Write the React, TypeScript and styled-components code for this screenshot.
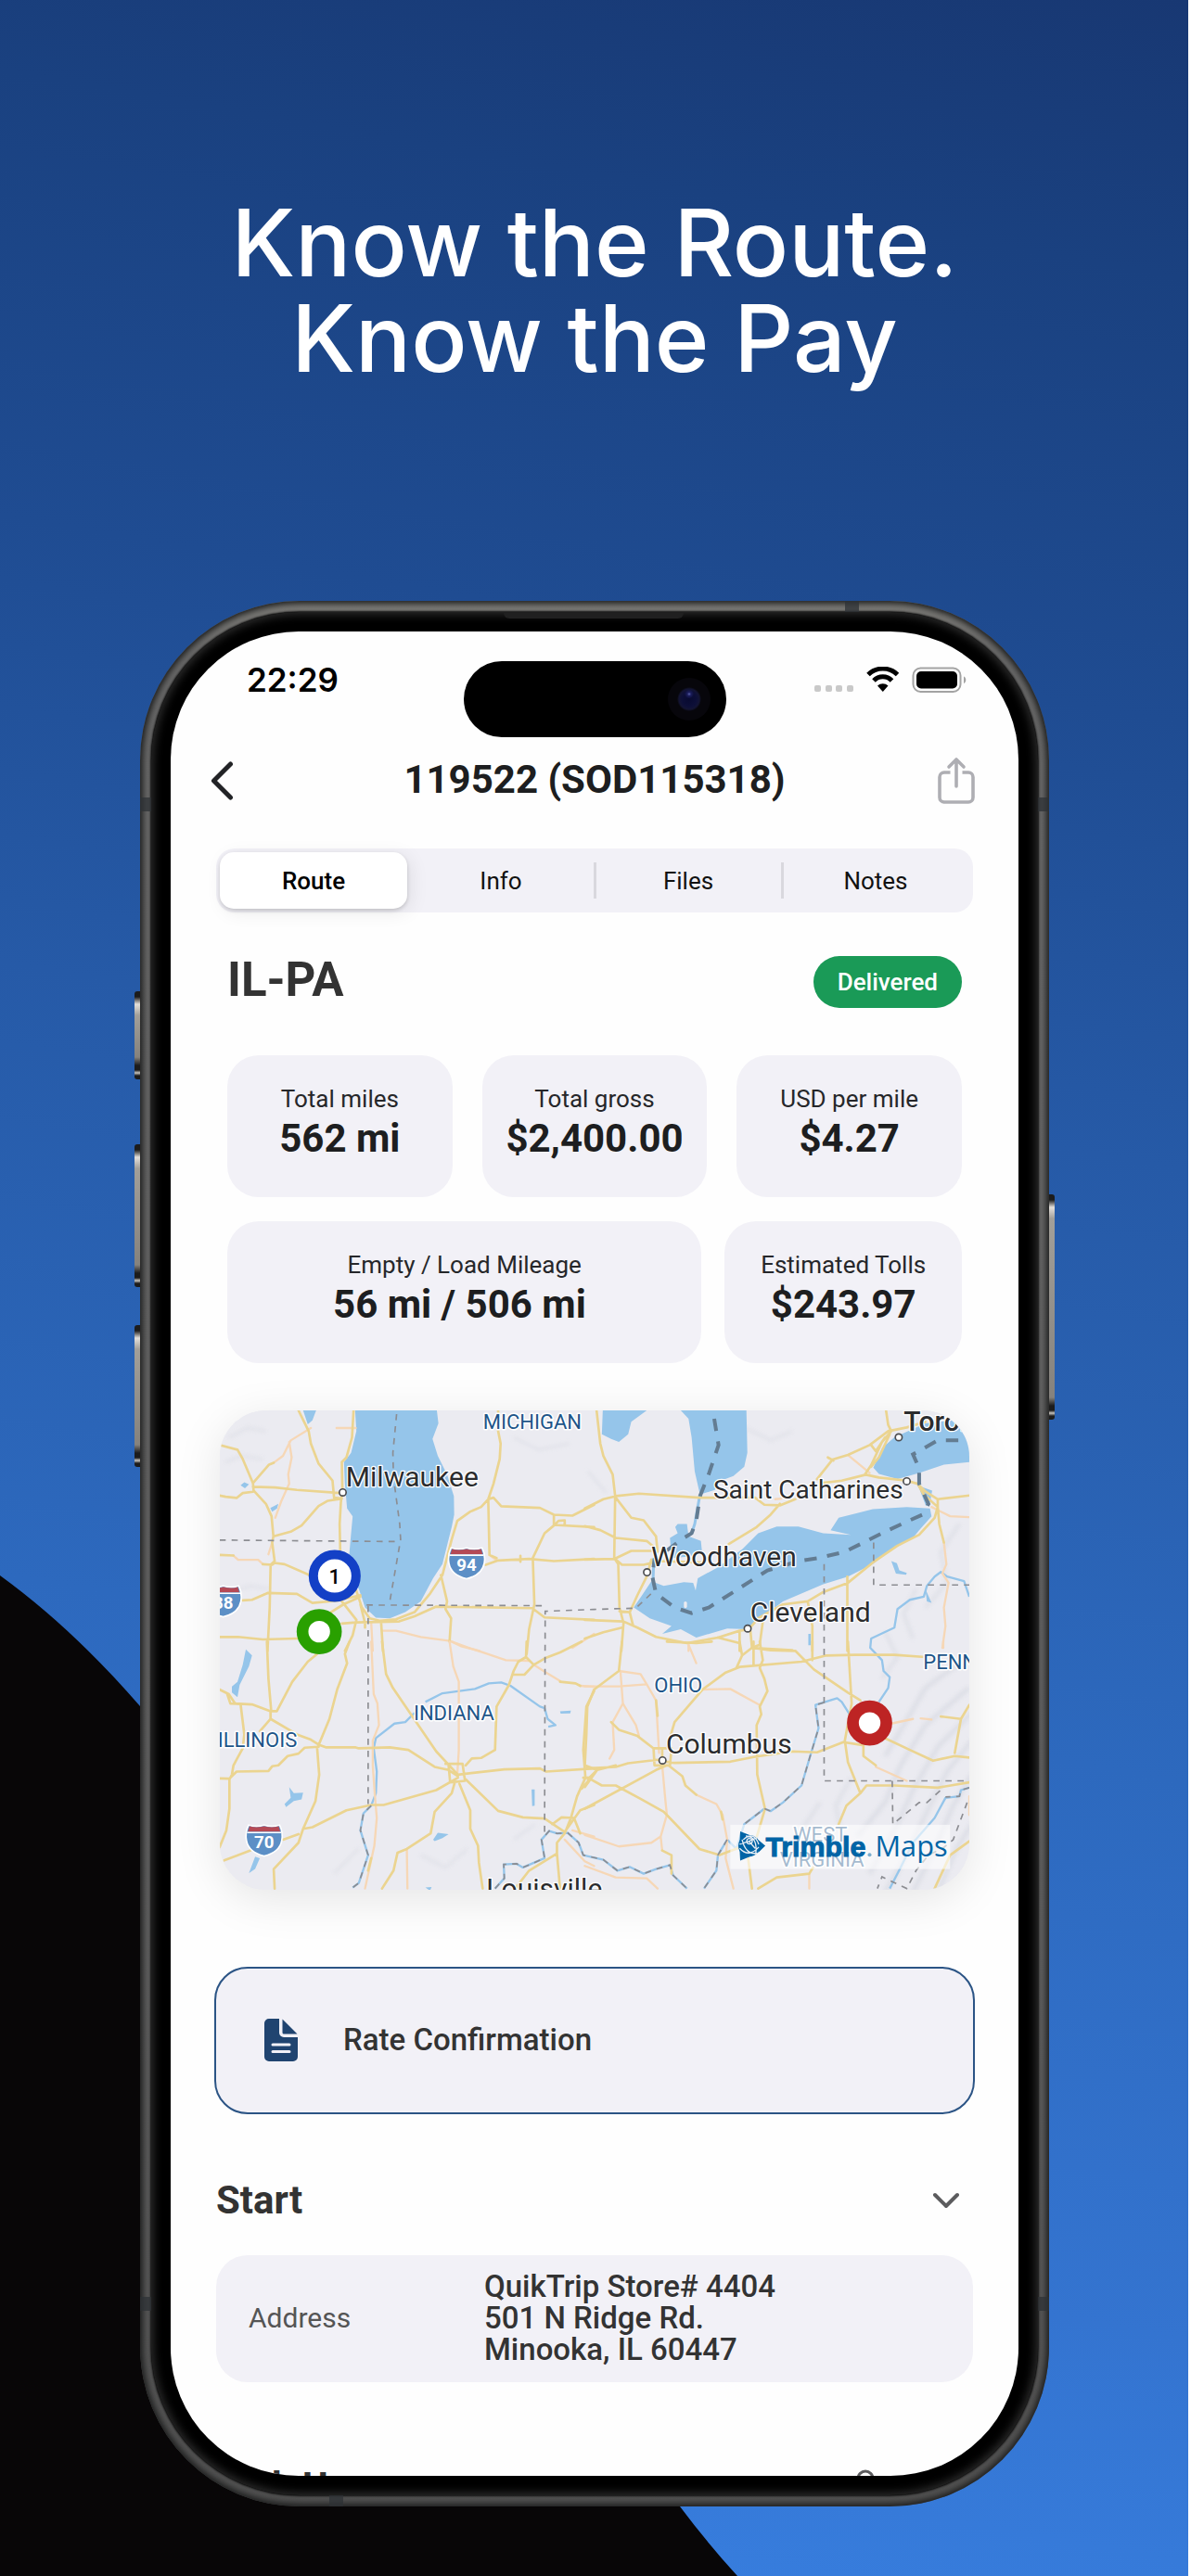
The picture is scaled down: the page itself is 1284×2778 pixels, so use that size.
import React, { useState } from 'react';
import styled, { createGlobalStyle } from 'styled-components';

const GlobalStyle = createGlobalStyle`
  * { box-sizing: border-box; }
  body { margin: 0; font-family: Roboto, "Liberation Sans", sans-serif; }
  button { font: inherit; color: inherit; border: 0; background: none; padding: 0; cursor: pointer; }
  h1, h2, h3, p, dl, dt, dd { margin: 0; font-weight: inherit; }
`;

const Page = styled.main`
  position: relative;
  overflow: hidden;
  min-height: 100vh;
  padding: 210px 23px 75px 24px;
  border-right: 3px solid #fff;
  display: flex;
  flex-direction: column;
  align-items: center;
  gap: 232px;
  background: linear-gradient(190deg, #183873 0%, #1a4180 10%, #1f4c92 26%, #265aa7 42%, #2d69be 64%, #3474d0 84%, #3880e2 100%);
`;

const Swoosh = styled.svg`
  position: absolute;
  left: 0;
  bottom: 0;
  width: 797px;
  height: 1079px;
`;

const Headline = styled.h1`
  position: relative;
  font-family: Inter, "Liberation Sans", sans-serif;
  font-size: 100px;
  line-height: 103px;
  font-weight: 500;
  text-align: center;
  color: #fff;
`;

/* Phone body */

const Phone = styled.section`
  position: relative;
  flex: none;
  display: flex;
  width: 980px;
  max-width: 100%;
  min-height: 0;
  aspect-ratio: 980 / 2055;
  padding: 12px;
  border-radius: 172px;
  background: linear-gradient(180deg, #7b7a76 0, #666 60px, #5d5d5d 70%, #505050 100%);
  box-shadow: inset 0 0 6px 3px #1d1e1e;
`;

const Bezel = styled.div`
  flex: 1;
  display: flex;
  min-width: 0;
  min-height: 0;
  padding: 21px;
  border-radius: 160px;
  background: #000;
  box-shadow: 0 0 2px 1px #111, inset 0 0 10px 3px #2b2b2b;
`;

const SideKey = styled.span<{ $side: 'left' | 'right'; $top: number; $height: number }>`
  position: absolute;
  ${(p) => p.$side}: -6px;
  top: ${(p) => p.$top}px;
  width: 6px;
  height: ${(p) => p.$height}px;
  border-radius: ${(p) => (p.$side === 'left' ? '3px 0 0 3px' : '0 3px 3px 0')};
  background: linear-gradient(180deg, #1c1c1c 0, #1c1c1c 6px, #e4e0db 14px, #a29f99 26px, #85827d calc(100% - 24px), #1c1c1c calc(100% - 15px), #1c1c1c calc(100% - 10px), #c9c6c0 calc(100% - 7px), #1c1c1c calc(100% - 4px));
`;

const Antenna = styled.span<{ $edge: 'top' | 'bottom' | 'left' | 'right'; $at: number }>`
  position: absolute;
  ${(p) => p.$edge}: 0;
  ${(p) => (p.$edge === 'top' || p.$edge === 'bottom' ? 'left' : 'top')}: ${(p) => p.$at}px;
  width: ${(p) => (p.$edge === 'top' || p.$edge === 'bottom' ? 15 : 12)}px;
  height: ${(p) => (p.$edge === 'top' || p.$edge === 'bottom' ? 12 : 15)}px;
  background: rgba(46, 50, 54, 0.75);
`;

const Speaker = styled.span`
  position: absolute;
  top: 13px;
  left: 50%;
  width: 194px;
  height: 6px;
  margin-left: -98px;
  border-radius: 0 0 6px 6px;
  background: #202020;
`;

const Screen = styled.div`
  flex: 1;
  min-width: 0;
  min-height: 0;
  overflow: hidden;
  border-radius: 138px;
  background: #fefefe;
`;

/* Status bar */

const StatusBar = styled.div`
  display: grid;
  grid-template-columns: 1fr 283px 1fr;
  align-items: start;
  padding: 32px 56px 0;
`;

const Clock = styled.time`
  padding-left: 26px;
  font-family: Inter, sans-serif;
  font-size: 35px;
  line-height: 40px;
  font-weight: 600;
  color: #000;
`;

const Island = styled.div`
  display: flex;
  justify-content: flex-end;
  align-items: center;
  height: 82px;
  padding-right: 17px;
  border-radius: 41px;
  background: #000;
`;

const Camera = styled.span`
  width: 46px;
  height: 46px;
  border-radius: 50%;
  background: radial-gradient(circle at 50% 38%, #5a62a8 0, #1b1d5c 2px, transparent 5px),
    radial-gradient(circle, #080a30 0, #0d0f38 8px, #131433 11px, #07060b 13px, #07060b 100%);
`;

const StatusIcons = styled.div`
  display: flex;
  justify-content: flex-end;
  align-items: center;
  height: 40px;
`;

/* Navigation */

const NavBar = styled.header`
  display: grid;
  grid-template-columns: 60px 1fr 60px;
  align-items: center;
  height: 50px;
  margin: 20px 40px 0;
`;

const NavButton = styled.button<{ $align: 'start' | 'end' }>`
  display: flex;
  justify-content: flex-${(p) => p.$align};
  padding: 0 ${(p) => (p.$align === 'end' ? 7 : 0)}px 0 ${(p) => (p.$align === 'start' ? 2 : 0)}px;
`;

const NavTitle = styled.h2`
  font-size: 42px;
  line-height: 50px;
  font-weight: 700;
  text-align: center;
  white-space: nowrap;
  color: #1d1e20;
`;

const Tabs = styled.div`
  display: grid;
  grid-template-columns: repeat(4, 1fr);
  margin: 50px 49px 0;
  padding: 4px;
  border-radius: 20px;
  background: #f2f1f7;
`;

const Tab = styled.button<{ $divided: boolean }>`
  position: relative;
  height: 61px;
  border-radius: 15px;
  font-size: 26px;
  line-height: 30px;
  color: #111;
  &[aria-selected='true'] {
    background: #fff;
    font-weight: 500;
    color: #000;
    box-shadow: 0 2px 4px rgba(0, 0, 0, 0.16), 4px 4px 20px rgba(0, 0, 0, 0.08);
  }
  &::before {
    content: '';
    position: absolute;
    left: -1px;
    top: 11px;
    width: 3px;
    height: 39px;
    background: ${(p) => (p.$divided ? '#d9d8de' : 'transparent')};
  }
`;

/* Summary */

const Summary = styled.section`
  display: flex;
  flex-direction: column;
  margin: 47px 61px 0;
`;

const LaneRow = styled.div`
  display: flex;
  justify-content: space-between;
  align-items: flex-start;
  margin-bottom: 51px;
`;

const Lane = styled.h3`
  font-size: 51px;
  line-height: 52px;
  font-weight: 700;
  color: #333;
`;

const StatusBadge = styled.span`
  padding: 13px 26px;
  border-radius: 28px;
  font-size: 26px;
  line-height: 30px;
  font-weight: 500;
  color: #fff;
  background: #1a9a57;
`;

const StatRow = styled.dl<{ $columns: string; $gap: number }>`
  display: grid;
  grid-template-columns: ${(p) => p.$columns};
  gap: ${(p) => p.$gap}px;
  & + & { margin-top: 26px; }
`;

const StatCard = styled.div`
  padding: 32px 0 35px;
  border-radius: 34px;
  text-align: center;
  white-space: nowrap;
  background: #f2f1f7;
`;

const StatLabel = styled.dt`
  font-size: 26px;
  line-height: 30px;
  color: #26272a;
`;

const StatValue = styled.dd`
  font-size: 42px;
  line-height: 56px;
  font-weight: 700;
  color: #1d1e20;
`;

/* Map */

const MapCard = styled.figure`
  margin: 51px 53px 0;
  border-radius: 50px;
  overflow: hidden;
  background: #ebebf1;
  box-shadow: 0 10px 50px rgba(0, 0, 0, 0.1);
  svg { display: block; width: 100%; height: auto; }
`;

/* Documents and stops */

const DocumentButton = styled.button`
  display: flex;
  align-items: center;
  gap: 48px;
  width: calc(100% - 94px);
  height: 159px;
  margin: 83px 47px 0;
  padding: 0 51px;
  border: 2px solid #2b5485;
  border-radius: 36px;
  font-size: 33px;
  line-height: 40px;
  font-weight: 500;
  color: #333;
  background: #f2f1f7;
`;

const Stop = styled.section<{ $gap: number }>`
  margin: ${(p) => p.$gap}px 49px 0;
`;

const StopHeader = styled.div<{ $inset: number }>`
  display: flex;
  justify-content: space-between;
  align-items: center;
  padding-right: ${(p) => p.$inset}px;
`;

const StopTitle = styled.h3`
  font-size: 42px;
  line-height: 50px;
  font-weight: 700;
  color: #333;
`;

const IconButton = styled.button`
  display: flex;
`;

const AddressCard = styled.dl`
  display: grid;
  grid-template-columns: 254px 1fr;
  align-items: center;
  margin-top: 34px;
  padding: 17px 35px 18px;
  border-radius: 34px;
  background: #f2f1f7;
`;

const AddressLabel = styled.dt`
  font-size: 30px;
  line-height: 34px;
  color: #555;
`;

const AddressText = styled.dd`
  font-size: 33px;
  line-height: 34px;
  font-weight: 500;
  color: #333;
`;

/* Icons */

const Signal = () => (
  <svg width="164" height="28" viewBox="0 0 164 28" aria-label="Wi-Fi, battery full">
    {[0, 12, 23, 35].map((x) => (
      <rect key={x} x={x} y="20" width="7" height="7" rx="2" fill="#c9c9c9" />
    ))}
    <g fill="none" stroke="#000">
      <path d="M58 8.500a22.500 22.500 0 0 1 31.500 0" strokeWidth="5" />
      <path d="M64 15a13.500 13.500 0 0 1 19.500 0" strokeWidth="5" />
    </g>
    <path d="M68 20.500a8.500 8.500 0 0 1 11.500 0L73.800 27Z" fill="#000" />
    <rect x="106.500" y="1.500" width="51" height="25.500" rx="8" fill="none" stroke="#a3a3a3" strokeWidth="2" />
    <rect x="110" y="5" width="44" height="18.500" rx="5" fill="#000" />
    <path d="M161 10.500c3 1 3 6.500 0 7.500Z" fill="#a3a3a3" />
  </svg>
);

const BackIcon = () => (
  <svg width="26" height="46" viewBox="0 0 26 46" fill="none" stroke="#222326" strokeWidth="5" strokeLinecap="round" strokeLinejoin="round">
    <path d="M22.500 6 4.500 24l18 18" />
  </svg>
);

const ShareIcon = () => (
  <svg width="40" height="52" viewBox="0 0 40 52" fill="none" stroke="#aeaeb3" strokeWidth="3.600" strokeLinecap="round" strokeLinejoin="round">
    <path d="M13.500 18H7a5 5 0 0 0-5 5v22a5 5 0 0 0 5 5h26a5 5 0 0 0 5-5V23a5 5 0 0 0-5-5h-6.500" strokeLinecap="butt" />
    <path d="M20 33V4M12 12l8-8 8 8" />
  </svg>
);

const DocumentIcon = () => (
  <svg width="38" height="48" viewBox="0 0 38 48">
    <path d="M6 1h11v15a5 5 0 0 0 5 5h15v21a5 5 0 0 1-5 5H6a5 5 0 0 1-5-5V6a5 5 0 0 1 5-5Z" fill="#204470" />
    <path d="M20.500 1.500 36.500 17.500H22a1.500 1.500 0 0 1-1.500-1.500Z" fill="#204470" />
    <path d="M10 29h18M10 36.500h18" stroke="#f2f1f7" strokeWidth="3" strokeLinecap="round" />
  </svg>
);

const ChevronIcon = () => (
  <svg width="30" height="18" viewBox="0 0 30 18" fill="none" stroke="#5c5c5e" strokeWidth="4" strokeLinecap="round" strokeLinejoin="round">
    <path d="M3 3l12 12L27 3" />
  </svg>
);

const ClipIcon = () => (
  <svg width="20" height="40" viewBox="0 0 20 40" fill="none" stroke="#5c5c5e" strokeWidth="3" strokeLinecap="round">
    <path d="M2 28V11a8 8 0 0 1 16 0v19a6 6 0 0 1-12 0V14" />
  </svg>
);

/* Map drawing */

const highways = [
  // north-west
  {
    at: [0, 0],
    main: 'M50 175 108 190 125 220 158 298 160 322 200 365 218 405 224 470 220 490 228 550 215 562 212 700 205 840M158 298 210 238 225 232M305 63 338 130 345 170 370 235 415 290 420 345 445 348 400 355 370 372 315 435 280 455 225 470M158 310 230 312 300 320 440 330M50 338 70 342 105 346 125 330 158 326M483 63 478 150 460 215 445 230 447 320 442 360 438 430 440 520M50 530 95 532M190 560 220 562 228 556 260 560 340 595M125 677 155 675 205 653 300 656 350 685 430 678 505 660M50 795 110 795 190 803 300 800M410 715 450 690 505 665M445 680 492 740M445 752 490 748 630 745 680 728 750 697 1060 702 1100 732 1260 740M490 640 510 700 535 735 570 743 620 738 680 715 730 655 770 595 800 480 818 420 860 390 895 375 918 350 935 300 955 220 958 170 950 130 950 63M918 350 922 530 945 540M918 350 935 345 960 373 1085 378 1130 400 1190 403 1260 368M1130 400 1130 435 1100 460 1062 540 1067 690 1050 770 1042 850M1130 435 1145 420 1165 418 1165 432M1130 433 1260 440M910 562 950 548 1050 543 1130 550 1260 543M1022 533 1022 552M765 595 785 680 780 705 798 735 793 810M572 748 578 840M492 740 480 790 455 840M505 690 520 750 520 765',
    minor: 'M225 232 255 210 280 160 345 120M275 165 283 215 272 270 275 300 250 355 230 410M428 120 490 120M95 532 110 546 175 546 190 560M220 490 208 528M540 750 545 840M575 775 620 775 700 795 795 808 830 825 890 840M1260 785 1190 830M922 530 945 548',
  },
  // north-east
  {
    at: [1230, 0],
    main: 'M38 63 50 170 60 210 90 270 98 340 95 540 108 560 112 700 125 750 118 840M0 380 60 350 100 340 175 332 370 345 550 345 580 368 630 370 680 350M630 365 600 400 555 440 465 495M100 345 150 410 190 418 230 470 235 520M0 437 50 450 100 475 200 485 230 510M0 545 95 543 150 517 215 517M95 540 120 562 190 562 240 550 380 555M215 545 200 600 170 660 145 715 155 755M112 712 145 715M0 740 125 745 170 765 230 795 330 815 430 797 500 775 530 770 560 735 640 690 720 680 770 650 850 620 930 555 1010 500 1080 465 1130 410 1140 375 1095 335 1075 300 1040 290 950 280 905 270 925 240 960 165 990 130 980 110 973 63M1100 100 1040 118 980 130 920 175 850 207 800 222 750 285M785 215 803 225M770 297 830 290 910 270M925 175 940 195 970 150M925 245 950 215 985 140M430 797 500 815M1075 300 1100 325 1140 350 1242 338M1140 350 1140 375 1145 430 1160 490M848 600 848 840M720 680 735 760 735 840M0 800 60 780 120 765M500 775 500 840M535 775 540 830 670 838M575 745 565 820 540 830',
    minor: 'M1160 490 1168 560 1155 590 1175 620 1160 700 1165 760 1155 830M1120 375 1140 385 1180 405 1242 408M850 207 920 265M335 815 335 840M615 350 635 348',
  },
  // south-west
  {
    at: [0, 810],
    main: 'M203 0 208 120 217 225M365 40 335 65 285 130 235 225 215 225M470 0 455 40 462 70 430 155 405 250 370 335M50 155 80 170 100 200 155 203 215 225 215 250 300 300 345 317 370 333 395 342 490 342 500 345 600 342 660 350 745 405 790 415 820 435M215 250 180 290M75 170 85 200 118 202 130 300 125 345 95 400 90 430 82 445 82 540 72 610 50 665M50 442 82 443 105 420 208 418 220 403 240 400 270 370 305 362 325 343 370 340M365 340 372 430 360 515 320 605 305 650 225 735 228 798M320 605 350 600 460 545 540 528 580 528 750 480 820 440M255 640 305 622M65 707 150 675M575 0 588 105 610 150 750 355 820 430M845 400 865 378 895 376 940 350 945 210 985 140 1000 95 1015 65 1040 50 1042 0M1040 50 1065 75 1035 107 1000 107M1065 75 1105 52 1150 35 1220 0M1150 130 1200 135 1215 143M780 395 835 395 843 450 795 455 790 400M820 430 970 413 1085 410 1105 420 1260 410M845 445 950 547 1030 568 1100 572 1165 615M825 460 860 545 860 605 885 660 888 715 900 798M810 455 800 490 745 550 732 620 655 670 625 682 612 740 575 798M1260 160 1235 210 1225 350 1232 440 1205 500 1185 570 1165 620M1125 590 1155 568 1195 570 1215 620M1165 615 1215 545 1260 528M1165 620 1140 650 1140 685 1050 740 1005 798M1140 685 1150 798M1225 440 1250 440 1220 475M540 700 530 740',
    minor: 'M1065 75 1105 100 1150 127M1215 143 1260 146M793 0 805 80 823 130 823 350 818 430M800 0 860 22 900 35 975 60 1050 62M655 670 657 798M540 0 548 170 560 200 565 270 545 320 545 400 552 500 558 570 550 660 520 798M1165 640 1230 710 1260 725M1190 610 1260 630M215 225 215 250',
  },
  // south-east
  {
    at: [1230, 810],
    main: 'M120 0 110 95 30 155 8 210 5 300 0 400 40 415 10 445M85 260 110 285 170 305 222 345 280 345 275 400 225 400 222 345M250 350 250 395M0 410 100 405 140 393 235 382M0 540 230 415 265 400M0 470 40 415 100 400M10 440 55 465 100 465 180 508 255 550 370 670 435 690 515 660M240 385 290 392 470 388 550 372 670 355 750 358 835 325 900 335 900 370 940 400M265 345 290 260 380 155 455 100 500 82 700 65 780 45 870 43 1000 43 1100 50M500 0 508 45 490 85M565 0 575 60 565 85 580 120 590 160 565 210 570 235 555 270 557 430 582 540 550 650M508 45 540 20 600 28 680 30 740 90 850 165 890 190M735 0 735 60M850 0 862 200 840 320 850 390 890 490 910 465 1000 465 1140 472 1242 455M270 400 315 435 325 465 360 495M250 675 280 690 280 750M230 190 235 240M525 680 540 798M560 798 620 762 725 750 740 725M890 490 845 530 820 590M965 310 1050 350 1125 385 1195 370 1242 375M1150 242 1215 250 1195 360M1215 250 1242 205M1242 645 1180 690 1130 798M440 550 445 575M265 0 360 5 410 0M545 0 545 75',
    minor: 'M0 145 110 145 200 138 230 190 240 360M110 95 180 105 200 138M115 95 123 200 90 260 95 350 80 378M123 200 165 270 175 305M380 155 470 153 565 205M335 10 360 70M360 495 425 525 445 560 460 640 455 700 480 798M250 400 260 510 265 560 245 630 250 675M0 625 110 662 215 650 245 630M265 560 370 670M0 725 100 762 200 765 235 798M460 720 480 798M725 750 725 798M940 405 1040 450M990 265 1060 250M1085 248 1120 252M1158 0 1158 20M1242 500 1242 560',
  },
];

const Shield = ({ x, y, label }: { x: number; y: number; label: string }) => (
  <g transform={`translate(${x} ${y})`}>
    <path d="M-50-50Q-25-42 0-50 25-42 50-50 62-25 57 0 50 38 0 50-50 38-57 0-62-25-50-50Z" fill="#5c8fc6" stroke="#fff" strokeWidth="5" />
    <path d="M-47-46Q-25-40 0-46 25-40 47-46L52-29H-52Z" fill="#b54a56" />
    <path d="M-55-26H55" stroke="#fff" strokeWidth="5" />
    <text x="0" y="24" textAnchor="middle" fontSize="56" fontWeight="700" fill="#fff">{label}</text>
  </g>
);

const cities = [
  { name: 'Milwaukee', x: 458, y: 308, dot: [448, 328] },
  { name: 'Saint Catharines', x: 1645, y: 348, dot: [2270, 292] },
  { name: 'Woodhaven', x: 1444, y: 566, dot: [1431, 586] },
  { name: 'Cleveland', x: 1764, y: 747, dot: [1756, 768] },
  { name: 'Columbus', x: 1492, y: 1173, dot: [1481, 1194] },
];

const states = [
  { name: 'MICHIGAN', x: 901, y: 122 },
  { name: 'INDIANA', x: 677, y: 1065 },
  { name: 'ILLINOIS', x: 44, y: 1152 },
  { name: 'OHIO', x: 1454, y: 973 },
  { name: 'PENNSYLVANIA', x: 2323, y: 900 },
  { name: 'WEST', x: 1903, y: 1455 },
  { name: 'VIRGINIA', x: 1860, y: 1536 },
];

const RouteMap = () => (
  <svg viewBox="51 63 2421 1548" role="img" aria-label="Route map from Illinois to Pennsylvania" fontFamily="Roboto, sans-serif">
    <defs>
      <filter id="relief" x="-10%" y="-10%" width="120%" height="120%"><feGaussianBlur stdDeviation="7" /></filter>
    </defs>
    <rect x="0" y="0" width="2500" height="1700" fill="#ebebf1" />
    <g fill="none" stroke="#d9dbe3" strokeWidth="14" opacity="0.8" filter="url(#relief)">
      <path d="M2470 960 2330 1080 2250 1210 2200 1330 2110 1440M2480 1040 2370 1150 2290 1290 2240 1400 2150 1560M2480 1130 2400 1230 2330 1370 2270 1500 2200 1620M2480 1240 2420 1340 2360 1480 2290 1620M2480 1400 2430 1480 2370 1620M2440 880 2330 960 2260 1080 2200 1180" />
      <path d="M2440 430 2380 520 2400 620 2330 700M2300 640 2260 720 2290 800M2200 780 2240 860 2190 930M2090 1250 2040 1340 2060 1430M1990 1330 1930 1420" strokeWidth="9" />
      <path d="M70 230 120 210 190 220M80 150 140 120 200 130M1000 150 1080 190 1180 170M1750 120 1830 160 1900 130M90 650 150 630 210 640M700 1500 780 1540 850 1480M420 1560 500 1480M1000 1450 1070 1400M1240 260 1300 330" strokeWidth="6" />
    </g>
    <g fill="#95c5ea">
      <path d="M488 63 492 130 475 200 452 230 455 300 462 380 480 405 475 460 468 540 470 600 500 640 520 700 555 733 600 735 650 715 700 680 740 605 770 560 785 500 800 440 808 400 807 340 785 270 755 210 738 155 757 105 752 63Z" />
      <path d="M320 63H362L350 95 335 108ZM118 305 130 295 145 302 132 315ZM214 378 240 365 236 380 220 390Z" />
      <path d="M1288 63H1430L1380 100 1370 140 1340 165 1315 155 1285 140ZM1540 63H1752L1755 200 1745 245 1710 275 1670 290 1650 320 1602 335 1585 260 1575 150 1565 90Z" />
      <path d="M1530 430 1560 430 1565 470 1605 485 1608 515 1570 535 1510 540 1505 475 1530 460 1522 440Z" />
      <path d="M1445 615 1485 630 1550 618 1580 620 1588 645 1595 605 1660 570 1740 510 1790 460 1850 438 1920 438 2000 460 2090 465 2024 450 2050 410 2110 395 2160 382 2270 375 2345 380 2350 405 2310 450 2290 475 2210 520 2160 560 2080 600 2000 625 1870 680 1790 740 1760 770 1690 768 1590 797 1540 770 1480 785 1510 760 1440 735 1388 700 1415 660Z" />
      <path d="M2472 230 2390 238 2310 265 2240 285 2180 268 2162 248 2190 185 2230 150 2330 105 2472 90Z" />
      <path d="M2318 310 2352 322 2345 362 2325 350ZM2220 550 2238 557 2246 580 2270 588 2268 594 2235 590ZM1952 785 1960 785 1960 822 1952 822ZM2330 640 2350 685 2335 680Z" />
      <path d="M135 835 155 855 145 890 115 950 108 990 90 975 90 955 108 940 125 885ZM275 1280 290 1300 320 1298 315 1320 290 1325 265 1345 260 1335 280 1315ZM165 1505 180 1510 165 1545 145 1558ZM740 1450 755 1428 790 1432 770 1445 745 1455ZM1058 1288H1068V1340L1060 1342ZM1150 1035 1185 1033 1183 1042 1152 1043ZM715 1605 735 1603 730 1615Z" />
    </g>
    <rect x="1550" y="680" width="10" height="22" rx="5" fill="#ebebf1" />
    <g fill="none" stroke="#95c5ea" strokeWidth="7" strokeLinejoin="round">
      <path d="M1602 335 1585 430 1575 460 1545 480M1453 540 1450 620" strokeWidth="9" />
      <path d="M2310 260 2312 310 2335 370M2472 665 2455 615 2400 600 2380 585 2360 600 2335 630 2325 665 2280 675 2240 705 2230 765 2155 800 2152 830 2190 870 2195 905 2215 925 2210 960 2180 1005" />
      <path d="M715 1005 770 977 875 963 920 945 960 942 990 953 1085 1020 1100 1025 1110 1060 1135 1080 1112 1085M680 1040 650 1070 615 1075 555 1122 548 1155 558 1230 555 1300 540 1340 515 1365 505 1420 530 1500 500 1590 480 1605" />
      <path d="M940 1608 970 1575 968 1530 1010 1528 1030 1540 1100 1510 1090 1450 1115 1422 1140 1430 1175 1428 1210 1460 1225 1500 1290 1515 1335 1550 1375 1538 1420 1560 1460 1545 1505 1532 1515 1565 1560 1608" />
      <path d="M2085 1045 2060 1005 2045 993 1975 1015 1985 1090 1955 1190 1930 1275 1870 1330 1830 1358 1810 1350 1745 1400 1720 1480 1690 1450 1660 1500 1655 1550 1615 1608M2472 1282 2445 1290 2440 1310 2395 1315 2360 1380 2290 1460 2250 1540 2215 1608" />
    </g>
    <g fill="none" strokeLinejoin="round" strokeLinecap="round">
      {highways.map((part, i) => (
        <g key={i} transform={`translate(${part.at[0]} ${part.at[1]})`}>
          <path d={part.minor} stroke="#f6d7b6" strokeWidth="7" />
          <path d={part.main} stroke="#ebd490" strokeWidth="8" />
        </g>
      ))}
    </g>
    <g fill="none" stroke="#8c8d92" strokeWidth="5" strokeDasharray="20 19">
      <path d="M622 75 610 200 612 280 632 430 635 480 598 692M50 482 635 487M525 692 1102 694M530 695V1335M1100 1425 1102 712 1260 706 1395 702 1455 645M2003 560V1260H2472M2163 490V627H2472M2223 1260 2225 1400 2310 1330 2335 1330 2380 1290M2465 1330 2420 1450 2390 1475 2340 1500 2300 1550 2270 1608 2190 1570 2175 1608" />
      <path d="M540 1340 515 1365 505 1420 530 1500 500 1590 480 1605M940 1608 970 1575 968 1530 1010 1528 1030 1540 1100 1510 1090 1450 1115 1422 1140 1430 1175 1428 1210 1460 1225 1500 1290 1515 1335 1550 1375 1538 1420 1560 1460 1545 1505 1532 1515 1565 1560 1608M2003 1007 1975 1015 1985 1090 1955 1190 1930 1275 1870 1330 1830 1358 1810 1350 1745 1400M1690 1450 1660 1500 1655 1550 1615 1608M2472 1282 2445 1290 2440 1310 2395 1312" />
    </g>
    <path d="M1648 90 1662 175 1630 270 1602 340 1590 420 1575 460 1550 475 1455 545 1448 600 1460 655 1520 700 1575 718 1630 700 1710 650 1820 580 1920 550 1985 540 2070 520 2130 490 2200 455 2280 418 2320 400 2340 365 2310 300 2310 250 2290 205 2370 160 2472 160" fill="none" stroke="#637c92" strokeWidth="12" strokeDasharray="40 34" />
    <Shield x={848} y={557} label="94" />
    <Shield x={62} y={680} label="88" />
    <Shield x={194} y={1453} label="70" />
    <g fill="#1d5589" fontSize="66" stroke="#fff" strokeWidth="9" strokeLinejoin="round" paintOrder="stroke">
      {states.map((s) => <text key={s.name} x={s.x} y={s.y}>{s.name}</text>)}
    </g>
    <g fill="#2b2c2e" fontSize="90" stroke="#fff" strokeWidth="8" strokeLinejoin="round" paintOrder="stroke">
      {cities.map((c) => (
        <text key={c.name} x={c.x} y={c.y} fontSize={c.name.length > 12 ? 84 : 90}>{c.name}</text>
      ))}
      <text x="2260" y="130" fontWeight="500">Toronto</text>
      <text x="912" y="1638">Louisville</text>
    </g>
    <g fill="#fff" stroke="#4c4d50" strokeWidth="5">
      {cities.map((c) => <circle key={c.name} cx={c.dot[0]} cy={c.dot[1]} r="11" />)}
      <circle cx="2244" cy="150" r="11" />
    </g>
    <circle cx="422" cy="598" r="69" fill="#fff" stroke="#1340c6" strokeWidth="30" />
    <text x="422" y="622" textAnchor="middle" fontSize="66" fontWeight="500">1</text>
    <circle cx="372" cy="778" r="54" fill="#fff" stroke="#29a000" strokeWidth="38" />
    <circle cx="2150" cy="1073" r="54" fill="#fff" stroke="#bd2424" strokeWidth="38" />
    <g transform="translate(1230 810)" fill="#0064a6">
      <rect x="470" y="592" width="710" height="143" fill="#fff" opacity="0.6" />
      <path d="M502 613 540 628 500 650ZM502 708 540 692 500 670ZM583 660 560 640V682Z" />
      <circle cx="531" cy="660" r="35" />
      <g fill="none" stroke="#e8eef5" strokeWidth="4">
        <path d="M500 668Q530 700 562 664M508 640Q520 690 556 684M512 640Q545 610 562 655M520 628Q560 630 552 688M500 655 530 645 560 632M530 645 550 668" />
        <circle cx="532" cy="645" r="9" />
      </g>
      <text x="584" y="695" fontFamily="Liberation Sans, sans-serif" fontSize="91" fontWeight="700" stroke="#0064a6" strokeWidth="3">Trimble</text>
      <circle cx="920" cy="689" r="6" opacity="0.5" />
      <text x="938" y="695" fontFamily="Open Sans, sans-serif" fontSize="92">Maps</text>
    </g>
  </svg>
);

const tabNames = ['Route', 'Info', 'Files', 'Notes'];

const mainStats = [
  { label: 'Total miles', value: '562 mi' },
  { label: 'Total gross', value: '$2,400.00' },
  { label: 'USD per mile', value: '$4.27' },
];

const extraStats = [
  { label: 'Empty / Load Mileage', value: '56 mi / 506 mi\u00a0' },
  { label: 'Estimated Tolls', value: '$243.97' },
];

const Stats = ({ items, columns, gap }: { items: { label: string; value: string }[]; columns: string; gap: number }) => (
  <StatRow $columns={columns} $gap={gap}>
    {items.map((s) => (
      <StatCard key={s.label}>
        <StatLabel>{s.label}</StatLabel>
        <StatValue>{s.value}</StatValue>
      </StatCard>
    ))}
  </StatRow>
);

export default function App() {
  const [tab, setTab] = useState(0);
  return (
    <Page>
      <GlobalStyle />
      <Swoosh viewBox="0 0 797 1079" aria-hidden="true">
        <path d="M0 0C55 40 105 88 151 141C400 430 560 750 733 1004Q763 1044 795 1079H0Z" fill="#080607" />
      </Swoosh>
      <Headline>Know the Route.<br />Know the Pay</Headline>
      <Phone>
        <SideKey $side="left" $top={421} $height={95} />
        <SideKey $side="left" $top={586} $height={154} />
        <SideKey $side="left" $top={781} $height={153} />
        <SideKey $side="right" $top={640} $height={243} />
        <Antenna $edge="top" $at={760} />
        <Antenna $edge="bottom" $at={204} />
        <Antenna $edge="left" $at={212} />
        <Antenna $edge="right" $at={212} />
        <Antenna $edge="left" $at={1829} />
        <Antenna $edge="right" $at={1829} />
        <Bezel>
          <Speaker />
          <Screen>
            <StatusBar>
              <Clock>22:29</Clock>
              <Island><Camera /></Island>
              <StatusIcons><Signal /></StatusIcons>
            </StatusBar>
            <NavBar>
              <NavButton $align="start" aria-label="Back"><BackIcon /></NavButton>
              <NavTitle>119522 (SOD115318)</NavTitle>
              <NavButton $align="end" aria-label="Share"><ShareIcon /></NavButton>
            </NavBar>
            <Tabs role="tablist">
              {tabNames.map((name, i) => (
                <Tab key={name} role="tab" aria-selected={i === tab} $divided={i > 0 && i !== tab && i - 1 !== tab} onClick={() => setTab(i)}>
                  {name}
                </Tab>
              ))}
            </Tabs>
            <Summary>
              <LaneRow>
                <Lane>IL-PA</Lane>
                <StatusBadge>Delivered</StatusBadge>
              </LaneRow>
              <Stats items={mainStats} columns="repeat(3, 1fr)" gap={32} />
              <Stats items={extraStats} columns="2fr 1fr" gap={25} />
            </Summary>
            <MapCard><RouteMap /></MapCard>
            <DocumentButton><DocumentIcon />Rate Confirmation</DocumentButton>
            <Stop $gap={68}>
              <StopHeader $inset={14}>
                <StopTitle>Start</StopTitle>
                <IconButton aria-label="Collapse start"><ChevronIcon /></IconButton>
              </StopHeader>
              <AddressCard>
                <AddressLabel>Address</AddressLabel>
                <AddressText>QuikTrip Store# 4404<br />501 N Ridge Rd.<br />Minooka, IL 60447</AddressText>
              </AddressCard>
            </Stop>
            <Stop $gap={88}>
              <StopHeader $inset={106}>
                <StopTitle>Pick Up</StopTitle>
                <IconButton aria-label="Attachments"><ClipIcon /></IconButton>
              </StopHeader>
            </Stop>
          </Screen>
        </Bezel>
      </Phone>
    </Page>
  );
}
